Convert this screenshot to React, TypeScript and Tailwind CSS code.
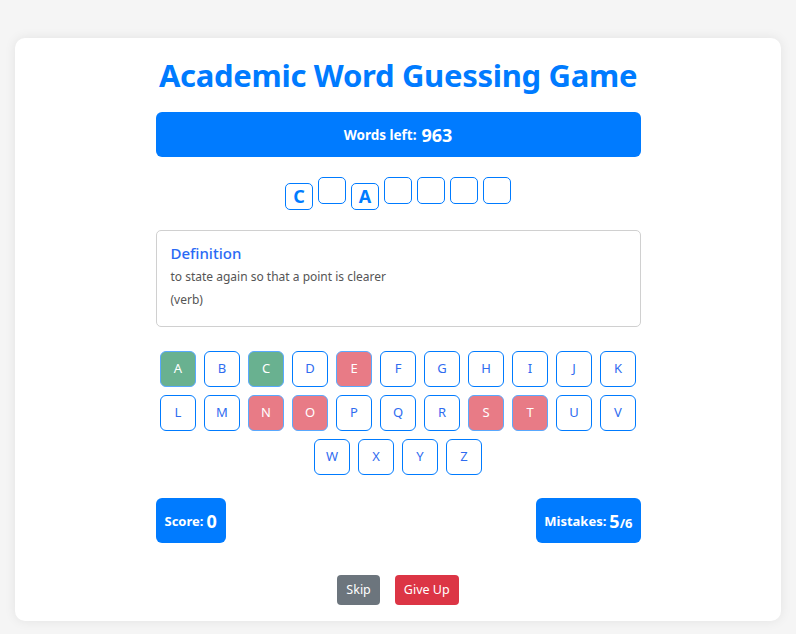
const word = ["C", "", "A", "", "", "", ""];

const rows = [
  ["A", "B", "C", "D", "E", "F", "G", "H", "I", "J", "K"],
  ["L", "M", "N", "O", "P", "Q", "R", "S", "T", "U", "V"],
  ["W", "X", "Y", "Z"],
];

const correct = ["A", "C"];
const wrong = ["E", "N", "O", "S", "T"];

function Key({ letter }: { letter: string }) {
  if (correct.includes(letter)) {
    return (
      <button className="flex h-[36px] w-[36px] items-center justify-center rounded-[6px] border border-[#59a9ff] bg-[#69b190] text-[13px] text-white">
        {letter}
      </button>
    );
  }
  if (wrong.includes(letter)) {
    return (
      <button className="flex h-[36px] w-[36px] items-center justify-center rounded-[6px] border border-[#59a9ff] bg-[#e87b86] text-[13px] text-white">
        {letter}
      </button>
    );
  }
  return (
    <button className="flex h-[36px] w-[36px] items-center justify-center rounded-[6px] border border-[#007bff] bg-white text-[13px] text-[#2f6cf0]">
      {letter}
    </button>
  );
}

export default function App() {
  return (
    <div className="min-h-screen bg-[#f5f5f5] px-[15px] pt-[38px] pb-[14px] font-['Noto_Sans',sans-serif]">
      <div className="rounded-[10px] bg-white pt-[14px] pb-[16px] shadow-[0_0_12px_rgba(0,0,0,0.08)]">
        <div className="mx-auto w-[485px]">
          <h1 className="text-center text-[31px] font-bold leading-[46px] tracking-[-0.3px] text-[#007bff]">
            Academic Word Guessing Game
          </h1>

          <div className="mt-[14px] flex h-[45px] items-center justify-center gap-[5px] rounded-[6px] bg-[#007bff] pt-[2px] text-white">
            <span className="text-[13.5px] font-bold">Words left:</span>
            <span className="text-[18px] font-bold">963</span>
          </div>

          <div className="mt-[20px] flex items-start justify-center gap-[5px]">
            {word.map((ch, i) => (
              <div
                key={i}
                className={
                  ch
                    ? "mt-[6px] flex h-[27px] w-[28px] items-center justify-center rounded-[5px] border border-[#007bff] text-[18px] font-bold text-[#007bff]"
                    : "flex h-[27px] w-[28px] rounded-[5px] border border-[#007bff]"
                }
              >
                {ch}
              </div>
            ))}
          </div>

          <div className="mt-[20px] h-[97px] rounded-[5px] border border-[#d0d0d0] px-[14px] pt-[11px]">
            <div className="text-[15px] font-medium text-[#2a6af5]">Definition</div>
            <p className="mt-[3px] text-[12px] text-[#555]">to state again so that a point is clearer</p>
            <p className="mt-[5px] text-[12px] text-[#555]">(verb)</p>
          </div>

          <div className="mt-[24px] flex flex-col items-center gap-[8px]">
            {rows.map((row, i) => (
              <div key={i} className="flex gap-[8px]">
                {row.map((l) => (
                  <Key key={l} letter={l} />
                ))}
              </div>
            ))}
          </div>

          <div className="mt-[23px] flex items-center justify-between">
            <div className="flex h-[45px] items-center gap-[3px] rounded-[6px] bg-[#007bff] px-[9px] pt-[2px] text-white">
              <span className="text-[13px] font-bold">Score:</span>
              <span className="text-[18px] font-bold">0</span>
            </div>
            <div className="flex h-[45px] items-center gap-[3px] rounded-[6px] bg-[#007bff] px-[8px] pt-[2px] text-white">
              <span className="text-[13px] font-bold">Mistakes:</span>
              <span className="font-bold">
                <span className="text-[18px]">5</span>
                <span className="text-[13px]">/6</span>
              </span>
            </div>
          </div>

          <div className="mt-[32px] flex justify-center gap-[15px]">
            <button className="h-[30px] rounded-[4px] bg-[#6c757d] px-[9px] text-[12.5px] text-white">Skip</button>
            <button className="h-[30px] rounded-[4px] bg-[#dc3545] px-[9px] text-[12.5px] text-white">Give Up</button>
          </div>
        </div>
      </div>
    </div>
  );
}
